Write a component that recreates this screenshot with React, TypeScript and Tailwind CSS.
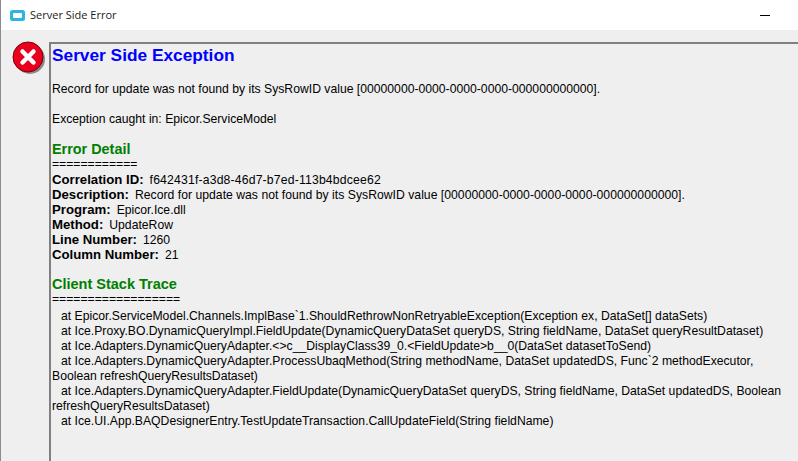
const lines = [
  'at Epicor.ServiceModel.Channels.ImplBase`1.ShouldRethrowNonRetryableException(Exception ex, DataSet[] dataSets)',
  'at Ice.Proxy.BO.DynamicQueryImpl.FieldUpdate(DynamicQueryDataSet queryDS, String fieldName, DataSet queryResultDataset)',
  'at Ice.Adapters.DynamicQueryAdapter.<>c__DisplayClass39_0.<FieldUpdate>b__0(DataSet datasetToSend)',
  'at Ice.Adapters.DynamicQueryAdapter.ProcessUbaqMethod(String methodName, DataSet updatedDS, Func`2 methodExecutor, Boolean refreshQueryResultsDataset)',
  'at Ice.Adapters.DynamicQueryAdapter.FieldUpdate(DynamicQueryDataSet queryDS, String fieldName, DataSet updatedDS, Boolean refreshQueryResultsDataset)',
  'at Ice.UI.App.BAQDesignerEntry.TestUpdateTransaction.CallUpdateField(String fieldName)',
];

const details = [
  ['Correlation ID:', 'f642431f-a3d8-46d7-b7ed-113b4bdcee62', 'tracking-[0.18px]'],
  ['Description:', 'Record for update was not found by its SysRowID value [00000000-0000-0000-0000-000000000000].', 'tracking-[0.02px]'],
  ['Program:', 'Epicor.Ice.dll', ''],
  ['Method:', 'UpdateRow', ''],
  ['Line Number:', '1260', ''],
  ['Column Number:', '21', ''],
];

function ErrorIcon() {
  return (
    <svg width="34" height="34" viewBox="0 0 34 34" className="shrink-0">
      <circle cx="18" cy="18" r="15" fill="#8a8a8a" />
      <circle cx="16" cy="16" r="15" fill="#e8001c" stroke="#7a0010" strokeWidth="1" />
      <path d="M10.5 10.5 L21.5 21.5 M21.5 10.5 L10.5 21.5" stroke="#fff" strokeWidth="4.5" strokeLinecap="round" />
    </svg>
  );
}

export default function App() {
  return (
    <div className="w-[798px] h-[461px] overflow-hidden flex flex-col bg-[#efefef] border-l border-[#8c8c8c] text-[12.2px] leading-[15px] text-black font-['Liberation_Sans',Arial,sans-serif]">
      {/* Title bar */}
      <div className="h-[30px] shrink-0 bg-white flex items-center pl-[9px] pr-[28px]">
        <svg width="15" height="11" viewBox="0 0 15 11">
          <rect width="15" height="11" rx="2.5" fill="#2bb5e0" />
          <rect x="3" y="3" width="9" height="5" rx="1" fill="#fff" />
        </svg>
        <span className="ml-[5px] -mt-px text-[11px] text-[#1a1a1a] font-['Open_Sans',sans-serif]">Server Side Error</span>
        <span className="ml-auto w-[10px] h-px bg-black" />
      </div>

      {/* Body */}
      <div className="flex-1 flex pt-[12px] pl-[11px] min-h-0">
        <div className="w-[37px] shrink-0 -mt-[1px]">
          <ErrorIcon />
        </div>
        <div className="flex-1 border-t-2 border-l-2 border-[#808080] pl-[1px] pr-[14px] pt-[1px]">
          <h1 className="text-[17.3px] leading-[20px] font-bold text-[#0000ff]">Server Side Exception</h1>
          <p className="mt-[17px]">Record for update was not found by its SysRowID value [00000000-0000-0000-0000-000000000000].</p>
          <p className="mt-[15px]">Exception caught in: Epicor.ServiceModel</p>

          <h2 className="mt-[15px] text-[14.4px] leading-[15px] font-bold text-[#008000]">Error Detail</h2>
          <p>============</p>
          <div className="mt-px">
            {details.map(([label, value, spacing]) => (
              <p key={label} className="h-[15px] whitespace-nowrap">
                <b className="text-[13.2px] leading-none">{label}</b>
                <span className={`ml-[6px] ${spacing}`}>{value}</span>
              </p>
            ))}
          </div>

          <h2 className="mt-[14px] text-[14.5px] leading-[15px] font-bold text-[#008000]">Client Stack Trace</h2>
          <p>==================</p>
          <div className="mt-[2px]">
            {lines.map((line) => (
              <p key={line} className="indent-[9px]">{line}</p>
            ))}
          </div>
        </div>
      </div>
    </div>
  );
}
